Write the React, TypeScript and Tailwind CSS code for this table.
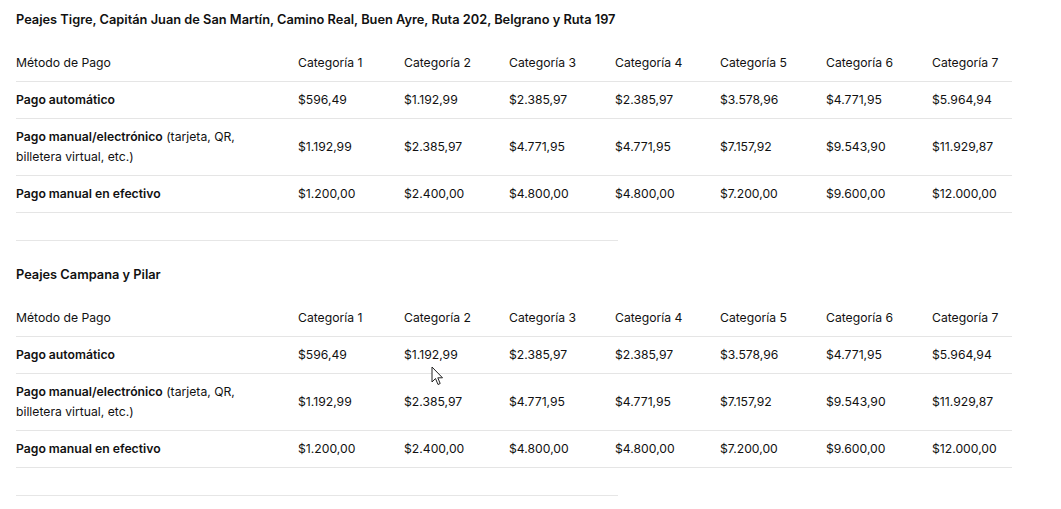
const CATEGORIES = ['Categoría 1', 'Categoría 2', 'Categoría 3', 'Categoría 4', 'Categoría 5', 'Categoría 6', 'Categoría 7']

const ROWS = [
  {
    label: 'Pago automático',
    extra: '',
    values: ['$596,49', '$1.192,99', '$2.385,97', '$2.385,97', '$3.578,96', '$4.771,95', '$5.964,94'],
  },
  {
    label: 'Pago manual/electrónico',
    extra: ' (tarjeta, QR, billetera virtual, etc.)',
    values: ['$1.192,99', '$2.385,97', '$4.771,95', '$4.771,95', '$7.157,92', '$9.543,90', '$11.929,87'],
  },
  {
    label: 'Pago manual en efectivo',
    extra: '',
    values: ['$1.200,00', '$2.400,00', '$4.800,00', '$4.800,00', '$7.200,00', '$9.600,00', '$12.000,00'],
  },
]

function TollTable({ title }: { title: string }) {
  return (
    <section>
      <h3 className="pt-[10px] mb-[13px] text-[12.8px] leading-5 font-semibold text-[#111]">{title}</h3>
      <table className="w-[996px] table-fixed border-collapse text-[12.2px] leading-5 text-[#111]">
        <colgroup>
          <col className="w-[282px]" />
          <col className="w-[106px]" />
          <col className="w-[105px]" />
          <col className="w-[106px]" />
          <col className="w-[105px]" />
          <col className="w-[106px]" />
          <col className="w-[106px]" />
          <col className="w-[80px]" />
        </colgroup>
        <thead>
          <tr className="border-b border-[#e5e5e5]">
            <th className="pt-[10px] pb-2 pr-4 text-left font-normal">Método de Pago</th>
            {CATEGORIES.map((c) => (
              <th key={c} className="pt-[10px] pb-2 text-left font-normal whitespace-nowrap">{c}</th>
            ))}
          </tr>
        </thead>
        <tbody>
          {ROWS.map((row) => (
            <tr key={row.label} className="border-b border-[#e5e5e5]">
              <td className="py-2 pr-[40px] align-middle">
                <span className="font-semibold">{row.label}</span>
                {row.extra}
              </td>
              {row.values.map((v, i) => (
                <td key={i} className="py-2 align-middle whitespace-nowrap">{v}</td>
              ))}
            </tr>
          ))}
        </tbody>
      </table>
      <div className="mt-[27px] w-[602px] h-px bg-[#e6e6e6]" />
    </section>
  )
}

export default function App() {
  return (
    <div className="relative min-h-[509px] bg-white px-4 font-['Inter','Liberation_Sans',sans-serif]">
      <TollTable title="Peajes Tigre, Capitán Juan de San Martín, Camino Real, Buen Ayre, Ruta 202, Belgrano y Ruta 197" />
      <div className="mt-[14px]">
        <TollTable title="Peajes Campana y Pilar" />
      </div>

      {/* mouse pointer */}
      <svg className="absolute left-[431px] top-[366px]" width="13" height="20" viewBox="0 0 13 20">
        <path d="M1 1 L1 16 L4.5 12.5 L7 18.5 L9.2 17.5 L6.8 11.8 L11.5 11.8 Z" fill="#fff" stroke="#222" strokeWidth="1" strokeLinejoin="round" />
      </svg>
    </div>
  )
}
